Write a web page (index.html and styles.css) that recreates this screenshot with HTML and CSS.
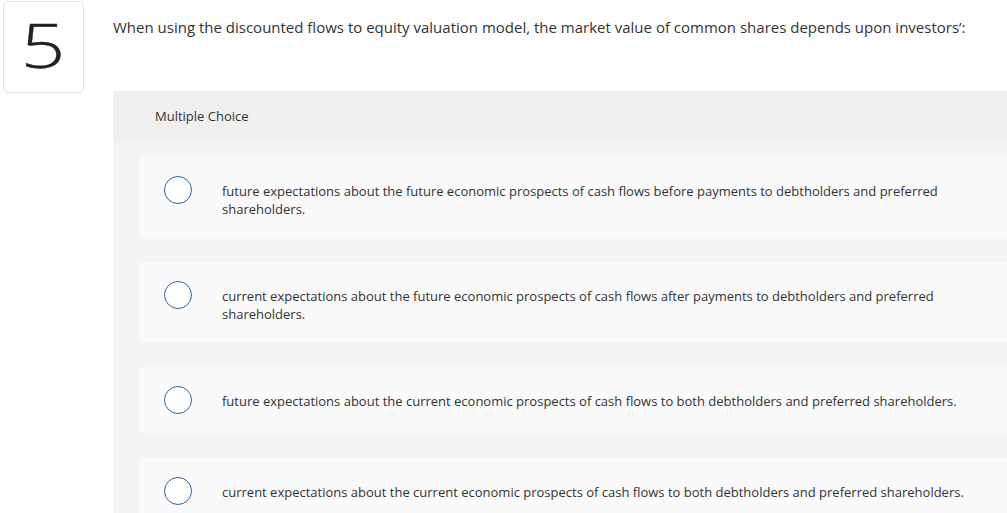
FILE: index.html
```html
<!DOCTYPE html>
<html>
<head>
<meta charset="utf-8">
<link rel="stylesheet" href="styles.css">
</head>
<body>
<div class="question">
  <div class="qnum"><span class="qnum-digit">5</span></div>
  <div class="qbody">
    <p class="prompt">When using the discounted flows to equity valuation model, the market value of common shares depends upon investors’:</p>
    <div class="panel">
      <div class="panel-head">Multiple Choice</div>
      <div class="choices">
        <div class="choice">
          <span class="radio"></span>
          <span class="choice-text">future expectations about the future economic prospects of cash flows before payments to debtholders and preferred shareholders.</span>
        </div>
        <div class="choice">
          <span class="radio"></span>
          <span class="choice-text">current expectations about the future economic prospects of cash flows after payments to debtholders and preferred shareholders.</span>
        </div>
        <div class="choice">
          <span class="radio"></span>
          <span class="choice-text">future expectations about the current economic prospects of cash flows to both debtholders and preferred shareholders.</span>
        </div>
        <div class="choice">
          <span class="radio"></span>
          <span class="choice-text">current expectations about the current economic prospects of cash flows to both debtholders and preferred shareholders.</span>
        </div>
      </div>
    </div>
  </div>
</div>
</body>
</html>
```
FILE: styles.css
```css
html, body {
  margin: 0;
  padding: 0;
  background: #ffffff;
  overflow: hidden;
}
body {
  font-family: "Open Sans", "Liberation Sans", sans-serif;
  color: #333333;
}
.question {
  display: flex;
  align-items: flex-start;
  padding: 1px 0 0 3px;
}
.qnum {
  flex: none;
  width: 81px;
  height: 92px;
  box-sizing: border-box;
  border: 1px solid #e3e3e3;
  border-radius: 5px;
  display: flex;
  align-items: center;
  justify-content: center;
  padding-bottom: 4px;
  font-size: 60px;
  font-weight: 300;
  color: #222222;
  line-height: 1;
}
.qnum-digit {
  display: inline-block;
  transform: scaleX(1.3);
  -webkit-text-stroke: 0.4px #222222;
}
.qbody {
  margin-left: 29px;
  flex: 1;
  min-width: 0;
}
.prompt {
  margin: 0;
  padding-top: 17px;
  height: 90px;
  box-sizing: border-box;
  font-size: 15px;
  line-height: 18px;
}
.panel-head {
  background: #efefef;
  height: 50px;
  line-height: 50px;
  padding-left: 42px;
  font-size: 13px;
  color: #333333;
}
.choices {
  background: #f4f4f4;
  padding: 16px 0 16px 26px;
  display: flex;
  flex-direction: column;
  gap: 25px;
}
.choice {
  background: #fafafa;
  border-radius: 3px 0 0 3px;
  display: flex;
  align-items: flex-start;
  padding: 19px 20px 19px 25px;
}
.radio {
  flex: none;
  width: 28px;
  height: 28px;
  box-sizing: border-box;
  border: 1.5px solid #2f629a;
  border-radius: 50%;
  background: #ffffff;
}
.choice-text {
  flex: 1;
  margin-left: 30px;
  margin-top: 6px;
  font-size: 13px;
  line-height: 18px;
  color: #333333;
}
```
